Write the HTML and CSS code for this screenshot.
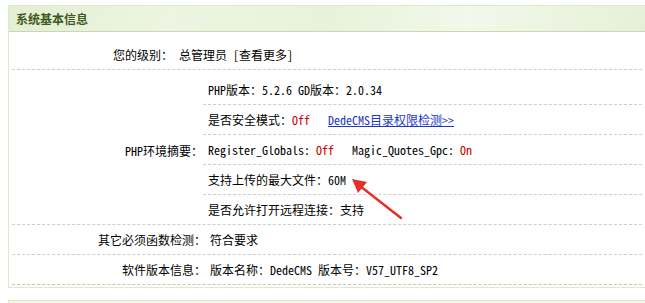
FILE: index.html
```html
<!DOCTYPE html>
<html lang="zh-CN">
<head>
  <meta charset="UTF-8" />
  <title>系统基本信息</title>
  <link rel="stylesheet" href="styles.css">
</head>
<body>

  <div class="page">
    <div class="box">
      <div class="box-head">系统基本信息</div>
      <div class="box-body">
        <div class="row row-first">
          <div class="lbl">您的级别：</div>
          <div class="val">总管理员 [<a class="plain" href="#">查看更多</a>]</div>
        </div>

        <!-- PHP 环境 -->
        <div class="row row-php">
          <div class="lbl">PHP环境摘要：</div>
          <div class="sub">
            <div class="sub-row">PHP版本：5.2.6 GD版本：2.0.34</div>
            <div class="sub-row">是否安全模式：<span class="red">Off</span><a class="link" href="#">DedeCMS目录权限检测&gt;&gt;</a></div>
            <div class="sub-row">Register_Globals: <span class="red">Off</span><span class="gap">Magic_Quotes_Gpc: </span><span class="red">On</span></div>
            <div class="sub-row">支持上传的最大文件：60M</div>
            <div class="sub-row">是否允许打开远程连接：支持</div>
          </div>
        </div>

        <div class="row">
          <div class="lbl">其它必须函数检测：</div>
          <div class="val">符合要求</div>
        </div>
        <div class="row">
          <div class="lbl">软件版本信息：</div>
          <div class="val">版本名称：DedeCMS 版本号：V57_UTF8_SP2</div>
        </div>
      </div>
    </div>

    <div class="box box-next">
      <div class="box-head"></div>
    </div>

    <!-- пометка стрелкой -->
    <svg class="arrow" width="645" height="303" viewBox="0 0 645 303">
      <line x1="401" y1="218" x2="360" y2="186" stroke="#e3302d" stroke-width="2.5" stroke-linecap="round" />
      <polygon points="352,179 358,193 363,187 367,182" fill="#e3302d" />
    </svg>
  </div>

</body>
</html>
```

FILE: styles.css
```css
body {
  margin: 0;
  font-family: "Noto Sans Mono CJK SC", "Noto Sans CJK SC", monospace;
  font-size: 12px;
  color: #000;
  background-color: #fff;
  overflow: hidden;
}

.page {
  position: relative;
  width: 645px;
  height: 303px;
  box-sizing: border-box;
  padding: 5px 0 0 8px;
  overflow: hidden;
}

.box {
  border: 1px solid #e2e7c9;
  border-right: none;
}

.box-head {
  height: 25px;
  line-height: 25px;
  padding-left: 7px;
  border-bottom: 1px solid #c8d9b0;
  background: linear-gradient(100deg, #e3eed3 0%, #edf5e2 25%, #e8f2db 50%, #f2f8ea 72%, #e6f0d8 100%);
  color: #3d5a1c;
  font-weight: bold;
}

.box-body {
  padding: 8px 3px 2px;
}

.row {
  display: flex;
  border-bottom: 1px dashed #cdcdcd;
}

.row:last-child {
  border-bottom: 1px dashed #c4c4c4;
}

.lbl {
  width: 194px;
  flex-shrink: 0;
  text-align: right;
  line-height: 29px;
}

.val {
  padding-left: 4px;
  line-height: 29px;
}

.row-first .lbl {
  width: 161px;
}

.row-first .val {
  padding-left: 6px;
}

.row-php .lbl {
  width: 191px;
  align-self: center;
  padding-top: 6px;
}

.sub {
  flex: 1;
  padding-top: 5px;
}

.sub-row {
  line-height: 29px;
  padding-left: 5px;
  border-bottom: 1px dashed #cdcdcd;
}

.sub-row:last-child {
  border-bottom: none;
}

.red {
  color: #cc0000;
}

.gap {
  margin-left: 18px;
}

.link {
  margin-left: 18px;
  color: #1a35c8;
  text-decoration: underline;
}

.plain {
  color: #000;
  text-decoration: none;
}

.box-next {
  margin-top: 12px;
}

.box-next .box-head {
  height: 3px;
  border-bottom: none;
  background: #f3f7ea;
}

.arrow {
  position: absolute;
  left: 0;
  top: 0;
  pointer-events: none;
}
```
